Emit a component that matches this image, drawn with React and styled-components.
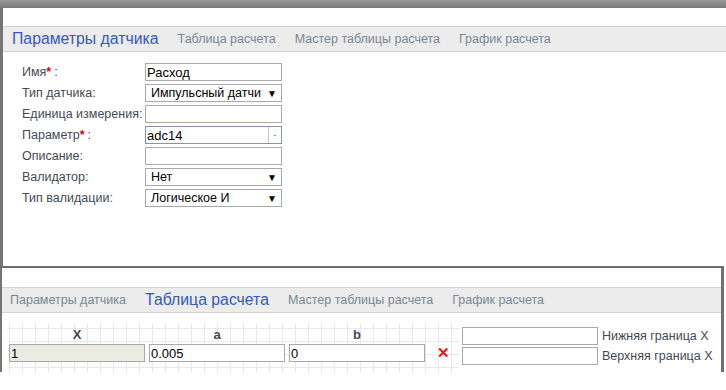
import React from "react";
import styled, { createGlobalStyle } from "styled-components";

const GlobalStyle = createGlobalStyle`
  html, body {
    margin: 0;
    padding: 0;
    background: #ffffff;
    font-family: "Liberation Sans", Arial, sans-serif;
  }
`;

const Page = styled.div`
  width: 726px;
  height: 390px;
  overflow: hidden;
  display: flex;
  flex-direction: column;
  background: #ffffff;
`;

const TopStrip = styled.div`
  height: 8px;
  background: linear-gradient(#9a9a9a, #7a7a7a);
  flex-shrink: 0;
`;

const Window = styled.div`
  box-sizing: border-box;
  background: #ffffff;
  flex-shrink: 0;
  height: ${(p) => p.h}px;
  width: ${(p) => p.w}px;
  border-left: ${(p) => p.bl}px solid #757575;
  border-right: ${(p) => p.br || 0}px solid #707070;
  border-top: ${(p) => p.bt || 0}px solid #6c6c6c;
  padding-top: ${(p) => p.pt}px;
`;

const TabBar = styled.div`
  height: 26px;
  box-sizing: border-box;
  background: #ececec;
  border-top: 1px solid #d2d2d2;
  border-bottom: 1px solid #d2d2d2;
  display: flex;
  align-items: center;
  padding-left: ${(p) => p.pl}px;
  gap: 19px;
`;

const Tab = styled.span`
  font-size: ${(p) => (p.active ? "15.8px" : "12.5px")};
  color: ${(p) => (p.active ? "#3458c0" : "#7a8795")};
  white-space: nowrap;
  line-height: 1;
`;

const Form = styled.div`
  display: grid;
  grid-template-columns: 123px 137px;
  grid-auto-rows: 18px;
  row-gap: 3px;
  padding: 11px 0 0 19px;
`;

const Label = styled.div`
  font-size: 12.5px;
  color: #444a52;
  display: flex;
  align-items: center;
  white-space: nowrap;
`;

const Star = styled.span`
  color: #e00000;
  font-weight: bold;
  margin-right: 3px;
`;

const Field = styled.div`
  box-sizing: border-box;
  height: 18px;
  border: 1px solid ${(p) => (p.focus ? "#8096b4" : "#a8a8a8")};
  background: ${(p) => (p.disabled ? "#ebebe4" : "#ffffff")};
  display: flex;
  align-items: center;
  padding-left: ${(p) => (p.select ? 5 : 1)}px;
  font-size: ${(p) => (p.select ? "12.5px" : "13px")};
  color: #000;
  overflow: hidden;
  white-space: nowrap;
`;

const FieldText = styled.span`
  flex: 1;
  overflow: hidden;
`;

const Arrow = styled.span`
  font-size: 10px;
  width: 14px;
  flex-shrink: 0;
  text-align: left;
  color: #000;
`;

const ComboButton = styled.span`
  width: 13px;
  height: 16px;
  box-sizing: border-box;
  border-left: 1px solid #c8c8c8;
  display: flex;
  align-items: center;
  justify-content: center;
  font-size: 9px;
  color: #666;
`;

const Body2 = styled.div`
  display: flex;
  padding: 10px 0 0 5px;
  gap: 3px;
`;

const Grid = styled.div`
  width: 450px;
  height: 50px;
  padding-left: 2px;
  background-color: #ffffff;
  background-image: linear-gradient(to right, #e8e8e8 1px, transparent 1px),
    linear-gradient(to bottom, #e8e8e8 1px, transparent 1px);
  background-size: 13px 13px;
  background-position: 2px 5px;
  display: grid;
  grid-template-columns: 136px 136px 136px 30px;
  column-gap: 4px;
  grid-template-rows: 21px 18px;
  align-content: start;
`;

const HeadCell = styled.div`
  font-size: 13px;
  font-weight: bold;
  color: #3e4a58;
  text-align: center;
  padding-top: 4px;
`;

const RemoveMark = styled.div`
  color: #ee1111;
  font-size: 15px;
  font-weight: bold;
  display: flex;
  align-items: center;
  padding-left: 8px;
`;

const Bounds = styled.div`
  display: grid;
  grid-template-columns: 136px auto;
  column-gap: 4px;
  row-gap: 3px;
  grid-auto-rows: 17px;
  padding-top: 4px;
`;

const BoundLabel = styled.div`
  font-size: 12.5px;
  color: #444a52;
  display: flex;
  align-items: center;
  white-space: nowrap;
`;

const rows = [
  { label: "Имя", req: true, value: "Расход" },
  { label: "Тип датчика:", select: true, value: "Импульсный датчи" },
  { label: "Единица измерения:", value: "" },
  { label: "Параметр", req: true, combo: true, value: "adc14" },
  { label: "Описание:", value: "" },
  { label: "Валидатор:", select: true, value: "Нет" },
  { label: "Тип валидации:", select: true, value: "Логическое И" },
];

const App = () => {
  return (
    <Page>
      <GlobalStyle />
      <TopStrip />
      <Window h={258} w={726} bl={3} pt={18}>
        <TabBar pl={9}>
          <Tab active>Параметры датчика</Tab>
          <Tab>Таблица расчета</Tab>
          <Tab>Мастер таблицы расчета</Tab>
          <Tab>График расчета</Tab>
        </TabBar>
        <Form>
          {rows.map((r) => (
            <React.Fragment key={r.label}>
              <Label>
                {r.label}
                {r.req && (
                  <>
                    <Star>*</Star>:
                  </>
                )}
              </Label>
              <Field select={r.select} focus={r.combo}>
                <FieldText>{r.value}</FieldText>
                {r.select && <Arrow>▼</Arrow>}
                {r.combo && <ComboButton>-</ComboButton>}
              </Field>
            </React.Fragment>
          ))}
        </Form>
      </Window>
      <Window h={106} w={724} bl={2} br={3} bt={2} pt={19}>
        <TabBar pl={8}>
          <Tab>Параметры датчика</Tab>
          <Tab active>Таблица расчета</Tab>
          <Tab>Мастер таблицы расчета</Tab>
          <Tab>График расчета</Tab>
        </TabBar>
        <Body2>
          <Grid>
            <HeadCell>X</HeadCell>
            <HeadCell>a</HeadCell>
            <HeadCell>b</HeadCell>
            <div />
            <Field disabled>1</Field>
            <Field>0.005</Field>
            <Field>0</Field>
            <RemoveMark>✕</RemoveMark>
          </Grid>
          <Bounds>
            <Field />
            <BoundLabel>Нижняя граница X</BoundLabel>
            <Field />
            <BoundLabel>Верхняя граница X</BoundLabel>
          </Bounds>
        </Body2>
      </Window>
    </Page>
  );
};

export default App;
